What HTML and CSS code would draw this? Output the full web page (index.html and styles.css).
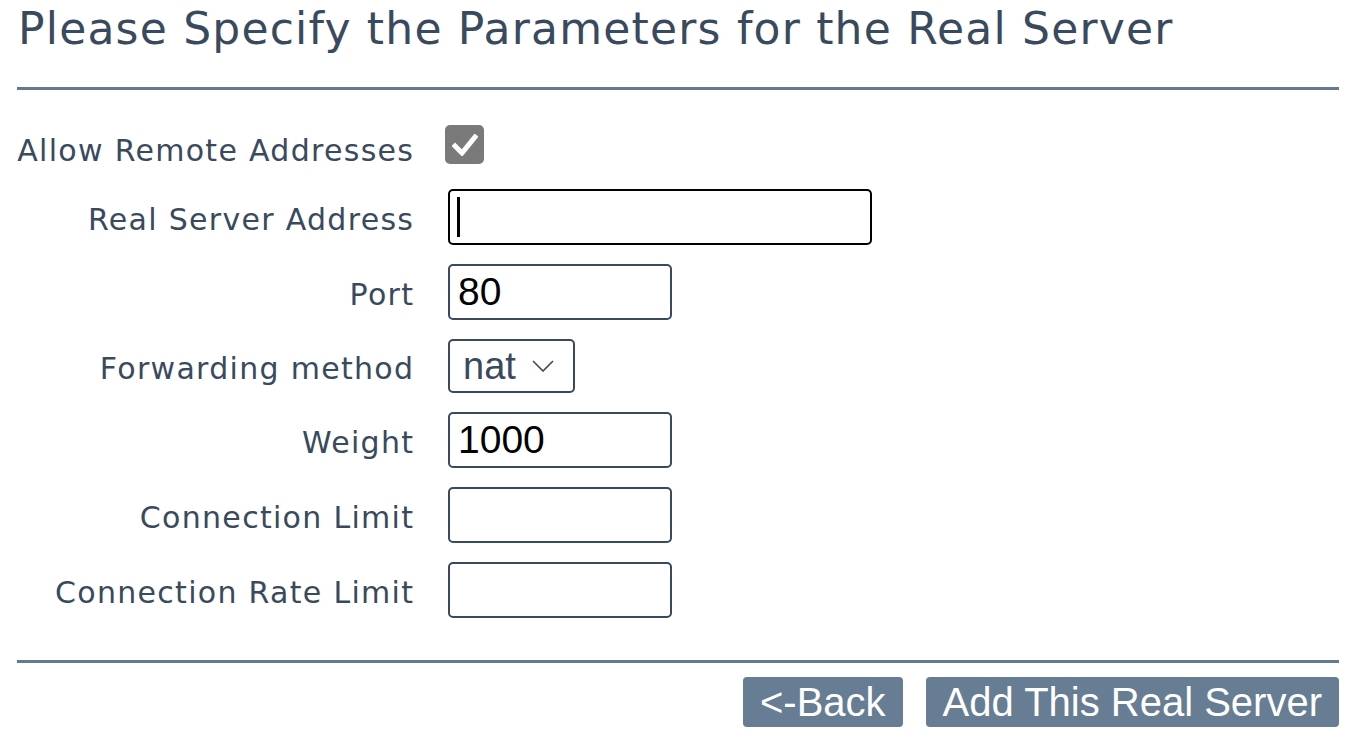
FILE: index.html
```html
<!DOCTYPE html>
<html lang="en">
<head>
  <meta charset="UTF-8">
  <meta name="viewport" content="width=device-width, initial-scale=1.0">
  <link rel="stylesheet" href="styles.css">
  <title>Add Real Server</title>
</head>
<body>

  <div class="page">
    <h1 class="title">Please Specify the Parameters for the Real Server</h1>
    <hr class="rule">

    <form class="form">
      <label class="lbl first">Allow Remote Addresses</label>
      <div class="ctl first">
        <span class="check">
          <svg width="26" height="22" viewBox="0 0 26 22"><path d="M3 12 L10 19 L23 3" fill="none" stroke="#fff" stroke-width="5" stroke-linecap="square"/></svg>
        </span>
      </div>

      <label class="lbl">Real Server Address</label>
      <div class="ctl">
        <span class="field focused wide"><span class="caret"></span></span>
      </div>

      <label class="lbl">Port</label>
      <div class="ctl"><span class="field">80</span></div>

      <label class="lbl">Forwarding method</label>
      <div class="ctl">
        <span class="select">nat
          <svg width="22" height="12" viewBox="0 0 22 12"><path d="M1 1 L11 11 L21 1" fill="none" stroke="#3a4a5e" stroke-width="1.6"/></svg>
        </span>
      </div>

      <label class="lbl">Weight</label>
      <div class="ctl"><span class="field">1000</span></div>

      <label class="lbl">Connection Limit</label>
      <div class="ctl"><span class="field"></span></div>

      <label class="lbl">Connection Rate Limit</label>
      <div class="ctl"><span class="field"></span></div>
    </form>

    <hr class="rule">

    <div class="actions">
      <button class="btn" type="button">&lt;-Back</button>
      <button class="btn" type="button">Add This Real Server</button>
    </div>
  </div>

</body>
</html>
```

FILE: styles.css
```css
*{
  margin: 0;
  padding: 0;
  box-sizing: border-box;
}
body{
  background: #fff;
  color: #3a4a5e;
  font-family: "DejaVu Sans", "Open Sans", sans-serif;
}
.page{
  width: 1339px;
  padding-left: 17px;
}
.title{
  font-weight: normal;
  font-size: 44px;
  letter-spacing: 1.2px;
  line-height: 58px;
  padding-left: 1px;
  color: #3a4a5e;
}
.rule{
  border: none;
  height: 3px;
  background: #667a8f;
}
.title + .rule{
  margin-top: 29px;
}
.form{
  display: grid;
  grid-template-columns: 396px auto;
  column-gap: 35px;
  row-gap: 19px;
  align-items: center;
  padding: 35px 0 42px;
}
.lbl{
  text-align: right;
  font-size: 30px;
  letter-spacing: 1.3px;
  margin-right: -1.3px;
  padding-top: 5px;
  color: #3a4a5e;
}
.lbl.first{
  align-self: start;
  padding-top: 8px;
}
.ctl{
  display: flex;
  align-items: center;
}
.ctl.first{
  align-self: start;
  height: 45px;
  align-items: flex-start;
}
.check{
  width: 39px;
  height: 39px;
  margin-left: -3px;
  background: #7a7a7a;
  border-radius: 5px;
  display: flex;
  align-items: center;
  justify-content: center;
}
.field{
  position: relative;
  display: flex;
  align-items: center;
  width: 224px;
  height: 56px;
  padding-left: 8px;
  border: 2.5px solid #3a4a5e;
  border-radius: 5px;
  font-family: "Liberation Sans", Arial, sans-serif;
  font-size: 39px;
  color: #000;
}
.field.wide{
  width: 424px;
}
.field.focused{
  border-color: #000;
}
.caret{
  position: absolute;
  left: 7px;
  top: 6px;
  width: 3px;
  height: 40px;
  background: #000;
}
.select{
  display: flex;
  align-items: center;
  gap: 16px;
  width: 127px;
  height: 54px;
  padding-left: 13px;
  border: 2.5px solid #3a4a5e;
  border-radius: 5px;
  font-family: "Liberation Sans", Arial, sans-serif;
  font-size: 38px;
  color: #3a4a5e;
}
.actions{
  display: flex;
  justify-content: flex-end;
  gap: 23px;
  padding-top: 14px;
}
.btn{
  height: 50px;
  padding: 0 17px;
  border: none;
  border-radius: 4px;
  background: #667d93;
  color: #fff;
  font-family: "Liberation Sans", Arial, sans-serif;
  font-size: 40px;
}
```
